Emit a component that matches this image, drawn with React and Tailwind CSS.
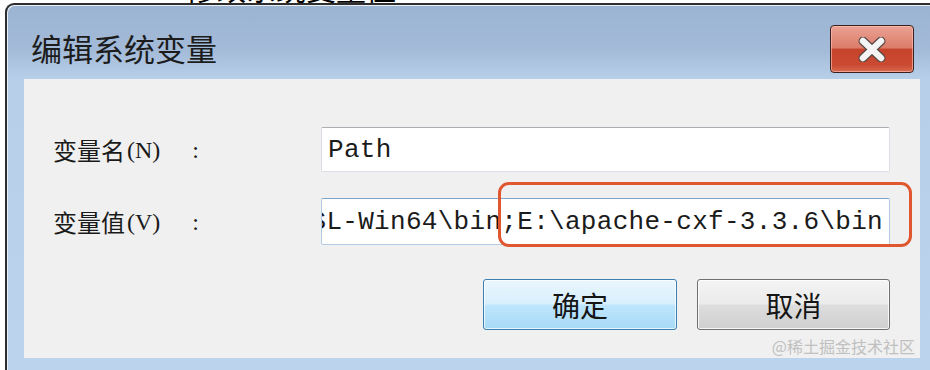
import React from 'react';

const cjk = { fontFamily: '"Noto Sans CJK SC", "Noto Sans", sans-serif' };
const mono = { fontFamily: '"Liberation Mono", "Noto Sans CJK SC", monospace' };
const serif = { fontFamily: '"Liberation Serif", serif' };

const Label = ({ text, hotkey }) => (
  <div className="w-[297px] shrink-0 pl-[29px] flex items-center text-[24px] leading-none text-[#1a1a1a]">
    <span style={cjk}>{text}</span>
    <span style={serif} className="ml-[2px] text-[24px]">({hotkey})</span>
    <span style={serif} className="ml-[32px] text-[24px]">:</span>
  </div>
);

const CloseIcon = () => (
  <svg width="30" height="25" viewBox="0 0 30 25">
    <path d="M6 4 L24 21 M24 4 L6 21" stroke="#5a4a48" strokeWidth="9" strokeLinecap="round" />
    <path d="M6 4 L24 21 M24 4 L6 21" stroke="#f4f4f4" strokeWidth="6.5" strokeLinecap="round" />
  </svg>
);

const App = () => {
  return (
    <div className="w-[930px] h-[370px] bg-white overflow-hidden flex flex-col">
      {/* bottom edge of text from the page above */}
      <div className="h-[3px] min-h-[3px] max-h-[3px] overflow-hidden pl-[186px] shrink-0">
        <div style={cjk} className="-mt-[28px] text-[30px] leading-[30px] text-black whitespace-nowrap">
          修改系统变量值
        </div>
      </div>

      <div className="flex-1 ml-[5px] border-l-2 border-t-2 border-[#2e2e2e] rounded-tl-[9px] flex flex-col overflow-hidden bg-[linear-gradient(to_bottom,#9bb4d2_0px,#a3bbd8_45px,#b8cfea_74px,#bcd3ee_100%)] shadow-[inset_1px_1px_0_#e8eef6]">
        {/* title bar */}
        <div className="h-[74px] flex items-start justify-between shrink-0">
          <div style={cjk} className="mt-[27px] pl-[24px] text-[31px] leading-none text-[#1c1c1c]">
            编辑系统变量
          </div>
          <button className="mt-[20px] mr-[16px] w-[84px] h-[48px] rounded-[4px] border border-[#3d1f1b] flex items-center justify-center bg-[linear-gradient(to_bottom,#eaa293_0%,#dc7c69_48%,#c6432b_50%,#ca4a31_85%,#d9694f_100%)] shadow-[inset_0_0_0_1px_rgba(255,200,190,0.6)]">
            <CloseIcon />
          </button>
        </div>

        {/* client area */}
        <div className="relative ml-[17px] mr-[10px] h-[279px] bg-[#f0f0f0] flex flex-col pt-[48px] shrink-0">
          <div className="flex items-center h-[45px]">
            <Label text="变量名" hotkey="N" />
            <div className="w-[569px] h-full bg-white border border-[#dbe0e6] border-t-[#abadb3] rounded-[2px] flex items-center pl-[6px]">
              <span style={mono} className="text-[26px] leading-none text-[#1b1b1b] tracking-[0.3px]">Path</span>
            </div>
          </div>

          <div className="flex items-center h-[47px] mt-[26px]">
            <Label text="变量值" hotkey="V" />
            <div className="w-[569px] h-full bg-white border border-[#b4cbe4] border-t-[#7fa4cc] rounded-[2px] flex items-center justify-end overflow-hidden pr-[6px]">
              <span style={mono} className="text-[26px] leading-none text-[#1b1b1b] whitespace-nowrap tracking-[0.3px]">
                C:\Program Files\OpenSSL-Win64\bin;E:\apache-cxf-3.3.6\bin
              </span>
            </div>
          </div>

          <div className="flex justify-end gap-[20px] pr-[30px] mt-[34px]">
            <button
              style={cjk}
              className="w-[194px] h-[51px] rounded-[3px] border border-[#3c7fb1] text-[28px] leading-none text-[#151515] bg-[linear-gradient(to_bottom,#eaf6fd_0%,#d9f0fc_48%,#bee6fd_52%,#a7d9f5_100%)] shadow-[inset_0_0_0_1px_rgba(255,255,255,0.7)]"
            >
              确定
            </button>
            <button
              style={cjk}
              className="w-[193px] h-[51px] rounded-[3px] border border-[#707070] text-[28px] leading-none text-[#151515] bg-[linear-gradient(to_bottom,#f4f4f4_0%,#ebebeb_48%,#dddddd_52%,#cfcfcf_100%)] shadow-[inset_0_0_0_1px_rgba(255,255,255,0.8)]"
            >
              取消
            </button>
          </div>

          <div style={cjk} className="mt-[8px] pr-[5px] text-right text-[16px] leading-[17px] text-[#c0c0c0]">
            @稀土掘金技术社区
          </div>

          {/* highlight annotation */}
          <div className="absolute left-[474px] top-[103px] w-[414px] h-[65px] border-[3px] border-[#e0562e] rounded-[11px]" />
        </div>
      </div>
    </div>
  );
};

export default App;
